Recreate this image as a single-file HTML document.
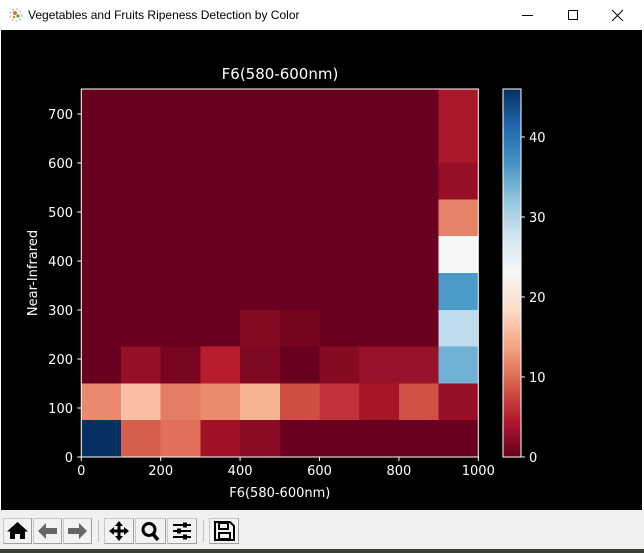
<!DOCTYPE html>
<html><head><style>
html,body{margin:0;padding:0;width:644px;height:553px;overflow:hidden;background:#fff;font-family:"Liberation Sans",sans-serif}
.tb{position:absolute;left:0;top:0;width:644px;height:30px;background:#fff}
.tt{position:absolute;left:28px;top:8px;font-size:12px;color:#000;font-family:"Segoe UI","Liberation Sans",sans-serif}
.blk{position:absolute;left:1px;top:30px;width:641px;height:480px;background:#000}
.bar{position:absolute;left:0;top:510px;width:644px;height:39px;background:#f0f0f0}
.desk{position:absolute;left:0;top:549px;width:644px;height:4px;background:#3a4036}
.btn{position:absolute;top:8px;width:29px;height:26px;border:1px solid #c8c8c8;border-right-color:#a0a0a0;border-bottom-color:#a0a0a0;background:#f2f2f2;box-sizing:border-box}
.sep{position:absolute;top:10px;width:1px;height:22px;background:#c0c0c0}
</style></head><body>
<div class="tb">
<svg style="position:absolute;left:8px;top:7px" width="16" height="16" viewBox="0 0 16 16"><circle cx="8" cy="8" r="6" fill="none" stroke="#9aa" stroke-dasharray="2 2"/><circle cx="7" cy="6" r="2" fill="#e07030"/><circle cx="10" cy="9" r="1.6" fill="#40a040"/><circle cx="6" cy="10" r="1.4" fill="#d0a020"/></svg>
<div class="tt">Vegetables and Fruits Ripeness Detection by Color</div>
<svg style="position:absolute;left:520px;top:8px" width="110" height="14" viewBox="0 0 110 14"><line x1="2" y1="7.5" x2="13" y2="7.5" stroke="#000"/><rect x="48.5" y="2.5" width="9" height="9" fill="none" stroke="#000"/><path d="M92 2 L103 13 M103 2 L92 13" stroke="#000"/></svg>
</div>
<div class="blk"></div>
<svg style="position:absolute;left:0;top:0" width="644" height="553" font-family="DejaVu Sans, sans-serif" font-size="13" fill="#fff">
<defs><linearGradient id="g" x1="0" y1="1" x2="0" y2="0">
<stop offset="0" stop-color="#67001f"/><stop offset=".1" stop-color="#b2182b"/><stop offset=".2" stop-color="#d6604d"/><stop offset=".3" stop-color="#f4a582"/><stop offset=".4" stop-color="#fddbc7"/><stop offset=".5" stop-color="#f7f7f7"/><stop offset=".6" stop-color="#d1e5f0"/><stop offset=".7" stop-color="#92c5de"/><stop offset=".8" stop-color="#4393c3"/><stop offset=".9" stop-color="#2166ac"/><stop offset="1" stop-color="#053061"/></linearGradient></defs>
<text x="280" y="79" text-anchor="middle" font-size="15">F6(580-600nm)</text>
<rect x="81.3" y="89" width="397" height="368" fill="#6a0020"/>
<g shape-rendering="crispEdges">
<rect x="81.3" y="420.2" width="39.7" height="36.8" fill="#053061"/>
<rect x="121" y="420.2" width="39.7" height="36.8" fill="#d6604d"/>
<rect x="160.7" y="420.2" width="39.7" height="36.8" fill="#e0705a"/>
<rect x="200.4" y="420.2" width="39.7" height="36.8" fill="#a11228"/>
<rect x="240.1" y="420.2" width="39.7" height="36.8" fill="#8a0b25"/>
<rect x="81.3" y="383.4" width="39.7" height="36.8" fill="#e98a6e"/>
<rect x="121" y="383.4" width="39.7" height="36.8" fill="#f8bfa4"/>
<rect x="160.7" y="383.4" width="39.7" height="36.8" fill="#e47d63"/>
<rect x="200.4" y="383.4" width="39.7" height="36.8" fill="#ea8c6e"/>
<rect x="240.1" y="383.4" width="39.7" height="36.8" fill="#f4b393"/>
<rect x="279.8" y="383.4" width="39.7" height="36.8" fill="#cf4f45"/>
<rect x="319.5" y="383.4" width="39.7" height="36.8" fill="#c0313a"/>
<rect x="359.2" y="383.4" width="39.7" height="36.8" fill="#a81529"/>
<rect x="398.9" y="383.4" width="39.7" height="36.8" fill="#cf5046"/>
<rect x="438.6" y="383.4" width="39.7" height="36.8" fill="#960f27"/>
<rect x="121" y="346.6" width="39.7" height="36.8" fill="#960f27"/>
<rect x="160.7" y="346.6" width="39.7" height="36.8" fill="#77051f"/>
<rect x="200.4" y="346.6" width="39.7" height="36.8" fill="#b71c2c"/>
<rect x="240.1" y="346.6" width="39.7" height="36.8" fill="#7f0822"/>
<rect x="279.8" y="346.6" width="39.7" height="36.8" fill="#67001f"/>
<rect x="319.5" y="346.6" width="39.7" height="36.8" fill="#850a24"/>
<rect x="359.2" y="346.6" width="79.4" height="36.8" fill="#96112a"/>
<rect x="438.6" y="346.6" width="39.7" height="36.8" fill="#6fb0d4"/>
<rect x="240.1" y="309.8" width="39.7" height="36.8" fill="#850a24"/>
<rect x="279.8" y="309.8" width="39.7" height="36.8" fill="#75041f"/>
<rect x="438.6" y="309.8" width="39.7" height="36.8" fill="#bedbeb"/>
<rect x="438.6" y="273" width="39.7" height="36.8" fill="#4b9ac8"/>
<rect x="438.6" y="236.2" width="39.7" height="36.8" fill="#f5f6f6"/>
<rect x="438.6" y="199.4" width="39.7" height="36.8" fill="#e58268"/>
<rect x="438.6" y="162.6" width="39.7" height="36.8" fill="#960f27"/>
<rect x="438.6" y="89" width="39.7" height="73.6" fill="#a9172a"/>
</g>
<rect x="81.3" y="89" width="397" height="368" fill="none" stroke="#fff" stroke-width="1"/>
<g stroke="#fff">
<path d="M81.3 457v4M160.7 457v4M240.1 457v4M319.5 457v4M398.9 457v4M478.3 457v4"/>
<path d="M81.3 457h-4M81.3 408h-4M81.3 359h-4M81.3 310h-4M81.3 261h-4M81.3 212h-4M81.3 163h-4M81.3 114h-4"/>
<path d="M521 457h4M521 377h4M521 297h4M521 217h4M521 137h4"/>
</g>
<g text-anchor="middle">
<text x="81.3" y="475">0</text><text x="160.7" y="475">200</text><text x="240.1" y="475">400</text><text x="319.5" y="475">600</text><text x="398.9" y="475">800</text><text x="478.3" y="475">1000</text>
<text x="279.8" y="497">F6(580-600nm)</text>
</g>
<g text-anchor="end">
<text x="73" y="462">0</text><text x="73" y="413">100</text><text x="73" y="364">200</text><text x="73" y="315">300</text><text x="73" y="266">400</text><text x="73" y="217">500</text><text x="73" y="168">600</text><text x="73" y="119">700</text>
</g>
<text transform="translate(37 273) rotate(-90)" text-anchor="middle">Near-Infrared</text>
<rect x="503" y="89" width="18" height="368" fill="url(#g)" stroke="#fff" stroke-width="1"/>
<text x="529" y="462">0</text><text x="529" y="382">10</text><text x="529" y="302">20</text><text x="529" y="222">30</text><text x="529" y="142">40</text>
</svg>
<div class="bar">
<div class="btn" style="left:3px"><svg width="27" height="24" viewBox="0 0 27 24"><path d="M13.5 3 L3 12.5 L6 12.5 L6 20 L11 20 L11 15 L16 15 L16 20 L21 20 L21 12.5 L24 12.5 Z" fill="#000"/></svg></div>
<div class="btn" style="left:33px"><svg width="27" height="24" viewBox="0 0 27 24"><path d="M4 12 L12 4 L12 9 L23 9 L23 15 L12 15 L12 20 Z" fill="#666"/></svg></div>
<div class="btn" style="left:63px"><svg width="27" height="24" viewBox="0 0 27 24"><path d="M23 12 L15 4 L15 9 L4 9 L4 15 L15 15 L15 20 Z" fill="#666"/></svg></div>
<div class="sep" style="left:98px"></div>
<div class="btn" style="left:104px;width:30px"><svg width="28" height="24" viewBox="0 0 28 24"><path d="M14 2 L18 7 L15.5 7 L15.5 10.5 L19 10.5 L19 8 L24 12 L19 16 L19 13.5 L15.5 13.5 L15.5 17 L18 17 L14 22 L10 17 L12.5 17 L12.5 13.5 L9 13.5 L9 16 L4 12 L9 8 L9 10.5 L12.5 10.5 L12.5 7 L10 7 Z" fill="#000"/></svg></div>
<div class="btn" style="left:135px;width:31px"><svg width="29" height="24" viewBox="0 0 29 24"><circle cx="13" cy="10.5" r="6" fill="none" stroke="#000" stroke-width="3"/><path d="M17 15 L22 21" stroke="#000" stroke-width="3.5"/></svg></div>
<div class="btn" style="left:167px;width:30px"><svg width="28" height="24" viewBox="0 0 28 24"><path d="M5 6h18M5 12h18M5 18h18" stroke="#000" stroke-width="2"/><rect x="15" y="3.5" width="4" height="5" fill="#000"/><rect x="9" y="9.5" width="4" height="5" fill="#000"/><rect x="15" y="15.5" width="4" height="5" fill="#000"/></svg></div>
<div class="sep" style="left:203px"></div>
<div class="btn" style="left:209px;width:30px"><svg width="28" height="24" viewBox="0 0 28 24"><path d="M5 3 L20 3 L24 7 L24 21 L5 21 Z" fill="none" stroke="#000" stroke-width="2"/><rect x="9" y="4" width="9" height="6" fill="none" stroke="#000" stroke-width="2"/><rect x="9" y="14" width="11" height="6" fill="none" stroke="#000" stroke-width="2"/></svg></div>
</div>
<div class="desk"></div>
</body></html>
